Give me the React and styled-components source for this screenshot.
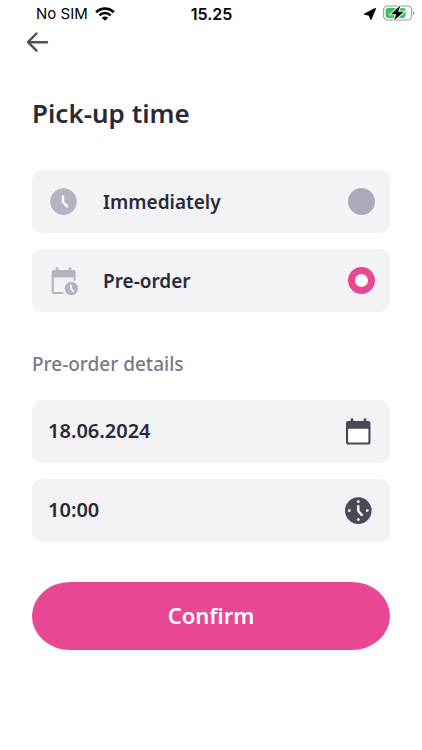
import React, { useState } from "react";
import styled, { createGlobalStyle } from "styled-components";

const ArrowIcon = () => (
  <svg width="24" height="24" viewBox="0 0 24 24" fill="none" aria-hidden="true">
    <path
      d="M11.5 3.5 3 12.2l8.500 8.500M3.500 12.200h18.500"
      stroke="#514f5f"
      strokeWidth="2.4"
      strokeLinecap="round"
      strokeLinejoin="round"
    />
  </svg>
);

const WifiIcon = () => (
  <svg width="20" height="14" viewBox="0 0 20 14" fill="none" aria-hidden="true">
    <path d="M1.2 5.2a12.6 12.6 0 0 1 17.6 0" stroke="#000" strokeWidth="2.8" />
    <path d="M4.4 8.4a8 8 0 0 1 11.2 0" stroke="#000" strokeWidth="2.5" />
    <path d="M10 13.8 6.8 10.7a4.6 4.6 0 0 1 6.4 0z" fill="#000" />
  </svg>
);

const LocationIcon = () => (
  <svg width="12" height="12" viewBox="0 0 12 12" aria-hidden="true">
    <path
      d="M11.3.7 6.9 11.2 5.4 7 .7 6.2z"
      fill="#000"
      stroke="#000"
      strokeWidth="1.3"
      strokeLinejoin="round"
    />
  </svg>
);

const BatteryIcon = () => (
  <svg width="32" height="18" viewBox="0 0 32 18" aria-hidden="true">
    <rect x=".6" y="1" width="28" height="14" rx="4" fill="none" stroke="#9b9b9f" strokeWidth="1.1" />
    <path d="M30 5.7c1.6.7 1.6 3.9 0 4.6z" fill="#9b9b9f" />
    <rect x="2.6" y="3" width="20" height="10" rx="2.4" fill="#35c759" />
    <path
      d="M17.4.6 7.8 9.2h5.4L11.2 15.600 20.800 6.800h-5.600z"
      fill="#000"
      stroke="#fff"
      strokeWidth="2"
      paintOrder="stroke"
    />
  </svg>
);

const ClockIcon = () => (
  <svg width="32" height="32" viewBox="0 0 32 32" fill="none" aria-hidden="true">
    <circle cx="15.5" cy="15.6" r="13.3" fill="#b3b4c1" />
    <path d="M15 10.4V16l4 4.4" stroke="#fff" strokeWidth="2.4" strokeLinecap="round" strokeLinejoin="round" />
  </svg>
);

const CalendarClockIcon = () => (
  <svg width="32" height="32" viewBox="0 0 32 32" fill="none" aria-hidden="true">
    <path
      d="M7.6 5V3.6a1.400 1.400 0 0 1 2.800 0V5h10.200V3.600a1.400 1.400 0 0 1 2.800 0V5h2a2.300 2.300 0 0 1 2.300 2.300v8.200h-2v-3H5.800v14.500h9.400V29H6a2.300 2.300 0 0 1-2.300-2.300V7.300A2.300 2.300 0 0 1 6 5z"
      fill="#b3b4c1"
    />
    <circle cx="23.4" cy="23.4" r="6.7" fill="#b3b4c1" />
    <path d="M23 20v3.6l2.2 2.600" stroke="#fff" strokeWidth="1.7" strokeLinecap="round" strokeLinejoin="round" />
  </svg>
);

const CalendarIcon = () => (
  <svg width="32" height="32" viewBox="0 0 32 32" aria-hidden="true">
    <path
      d="M8.6 5V3.7a1.400 1.400 0 0 1 2.800 0V5h10.200V3.700a1.400 1.400 0 0 1 2.800 0V5h1.900a2.200 2.200 0 0 1 2.200 2.200v19.200a2.200 2.200 0 0 1-2.200 2.200H6.200A2.200 2.200 0 0 1 4 26.400V7.200A2.200 2.200 0 0 1 6.200 5z"
      fill="#4a4959"
    />
    <rect x="6.1" y="12.7" width="20.300" height="13.700" rx=".8" fill="#fff" />
  </svg>
);

const DialIcon = () => (
  <svg width="32" height="32" viewBox="0 0 32 32" fill="none" aria-hidden="true">
    <circle cx="16.3" cy="15.6" r="13.3" fill="#4a4959" />
    <g fill="#fff">
      <circle cx="16.3" cy="6.6" r="1.4" />
      <circle cx="16.3" cy="24.6" r="1.4" />
      <circle cx="7.3" cy="15.6" r="1.4" />
      <circle cx="25.3" cy="15.6" r="1.4" />
    </g>
    <path d="M16.3 11.2V16l3.500 4" stroke="#fff" strokeWidth="2.4" strokeLinecap="round" strokeLinejoin="round" />
  </svg>
);

const options = [
  { id: "now", title: "Immediately", icon: <ClockIcon /> },
  { id: "preorder", title: "Pre-order", icon: <CalendarClockIcon /> },
];

export default function App() {
  const [pickup, setPickup] = useState("preorder");
  const [date, setDate] = useState("18.06.2024");
  const [time, setTime] = useState("10:00");

  return (
    <>
      <GlobalStyle />
      <StatusBar>
        <StatusGroup>
          No SIM
          <WifiIcon />
        </StatusGroup>
        <StatusTime>15.25</StatusTime>
        <StatusGroup $end>
          <LocationIcon />
          <BatteryIcon />
        </StatusGroup>
      </StatusBar>
      <BackButton type="button" aria-label="Back">
        <ArrowIcon />
      </BackButton>
      <Content>
        <Title>Pick-up time</Title>
        <Stack role="radiogroup" aria-label="Pick-up time">
          {options.map((option) => (
            <Option key={option.id}>
              {option.icon}
              <OptionTitle>{option.title}</OptionTitle>
              <Radio
                name="pickup"
                checked={pickup === option.id}
                onChange={() => setPickup(option.id)}
              />
            </Option>
          ))}
        </Stack>
        <Subtitle>Pre-order details</Subtitle>
        <Stack>
          <Field>
            <FieldInput
              aria-label="Date"
              value={date}
              onChange={(e) => setDate(e.target.value)}
            />
            <CalendarIcon />
          </Field>
          <Field>
            <FieldInput
              aria-label="Time"
              value={time}
              onChange={(e) => setTime(e.target.value)}
            />
            <DialIcon />
          </Field>
        </Stack>
        <ConfirmButton type="button">Confirm</ConfirmButton>
      </Content>
    </>
  );
}

const GlobalStyle = createGlobalStyle`
  * {
    box-sizing: border-box;
  }
  body {
    margin: 0;
    background: #fff;
    color: #2b2938;
    font-family: "Noto Sans", sans-serif;
  }
  svg {
    display: block;
    flex-shrink: 0;
  }
`;
const StatusBar = styled.div`
  display: grid;
  grid-template-columns: 1fr auto 1fr;
  align-items: center;
  height: 28px;
  padding: 0 7px 0 36px;
  color: #000;
  font-family: Inter, sans-serif;
  font-size: 15px;
  line-height: 20px;
`;
const StatusGroup = styled.div`
  display: flex;
  align-items: center;
  justify-content: ${({ $end }) => ($end ? "flex-end" : "flex-start")};
  gap: 7px;
`;
const StatusTime = styled.div`
  margin-right: 28px;
  font-size: 16px;
  font-weight: 600;
`;
const BackButton = styled.button`
  display: block;
  margin: 2px 0 0 25px;
  padding: 0;
  border: none;
  background: none;
  cursor: pointer;
`;
const Content = styled.main`
  padding: 42px 32px 32px;
`;
const Title = styled.h1`
  margin: 0 0 40px;
  font-size: 26px;
  font-weight: 600;
  line-height: 34px;
`;
const Subtitle = styled.h2`
  margin: 38px 0 22px;
  color: #7b7986;
  font-size: 19px;
  font-weight: 500;
  line-height: 28px;
`;
const Stack = styled.div`
  display: flex;
  flex-direction: column;
  gap: 16px;
`;
const Option = styled.label`
  display: flex;
  align-items: center;
  gap: 23px;
  height: 63px;
  padding: 0 15px 0 16px;
  border-radius: 10px;
  background: #f3f3f6;
  cursor: pointer;
`;
const OptionTitle = styled.span`
  flex: 1;
  font-size: 19px;
  font-weight: 600;
  line-height: 26px;
`;
const Radio = styled.input.attrs({ type: "radio" })`
  appearance: none;
  width: 27px;
  height: 27px;
  margin: 0;
  border-radius: 50%;
  background: #a9abb9;
  cursor: pointer;

  &:checked {
    border: 7px solid #e84893;
    background: #fff;
  }
`;
const Field = styled.div`
  display: flex;
  align-items: center;
  height: 63px;
  padding: 0 16px;
  border-radius: 10px;
  background: #f3f3f6;
`;
const FieldInput = styled.input`
  flex: 1;
  min-width: 0;
  padding: 0 0 2px;
  border: none;
  outline: none;
  background: none;
  color: inherit;
  font-family: inherit;
  font-size: 20px;
  font-weight: 600;
`;
const ConfirmButton = styled.button`
  display: block;
  width: 100%;
  height: 68px;
  margin-top: 40px;
  padding-bottom: 3px;
  border: none;
  border-radius: 38px / 34px;
  background: #e84893;
  color: #fff;
  font-family: inherit;
  font-size: 22px;
  font-weight: 600;
  cursor: pointer;
`;
